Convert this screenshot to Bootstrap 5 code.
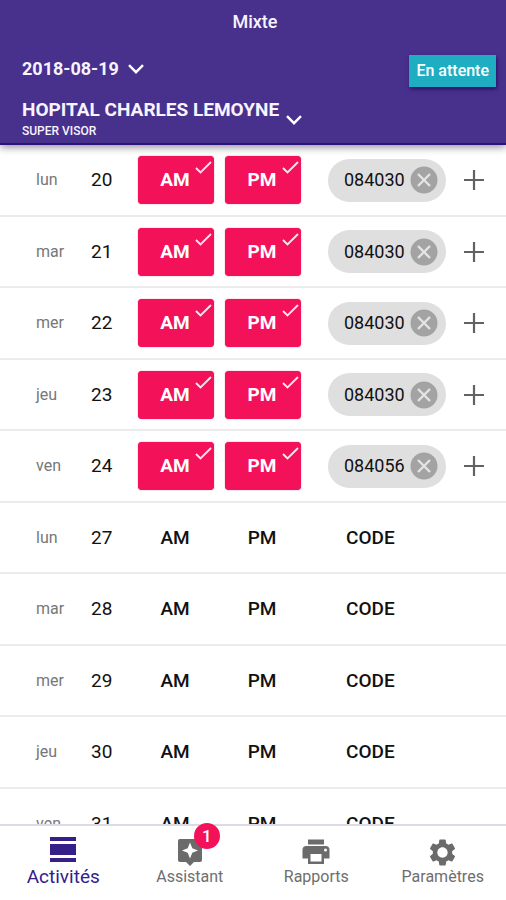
<!DOCTYPE html>
<html lang="fr">
<head>
<meta charset="utf-8">
<meta name="viewport" content="width=device-width, initial-scale=1">
<title>Mixte</title>
<link href="https://cdn.jsdelivr.net/npm/bootstrap@5.3.0/dist/css/bootstrap.min.css" rel="stylesheet">
<style>
  body { font-family: Roboto, "Noto Sans", sans-serif; color: #111; background: #fff; line-height: 24px; font-size: 18px; }
  button { font-family: inherit; }
  svg { display: block; flex: none; }
  .app-head { background: #48318d; border-bottom: 2px solid #2c1280; box-shadow: 0 2px 8px rgba(0,0,0,.45); z-index: 2; color: #f7f4ff; padding: 10px 10px 3px 22px; }
  .app-title { font-size: 18px; line-height: 24px; font-weight: 500; }
  .date-row { padding-top: 21px; }
  .plain { background: none; border: 0; padding: 0; color: inherit; }
  .date-btn { font-size: 18px; font-weight: 700; line-height: 28px; gap: 9px; padding-bottom: 4px; }
  .site-btn { gap: 7px; margin-top: 11px; }
  .site-name { font-size: 19px; font-weight: 700; line-height: 24px; }
  .site-role { font-size: 12px; font-weight: 500; line-height: 18px; }
  .site-btn svg { margin-top: 2px; }
  .status-btn { background: #1fadc2; color: #fff; font-size: 16px; font-weight: 500; line-height: 24px; padding: 4px 7px; border: 0; border-radius: 0; box-shadow: 1px 2px 4px rgba(20,0,80,.7); }
  .day-row { display: grid; grid-template-columns: 55px 47px 76px 76px minmax(118px, 1fr) 20px; align-items: center; padding: 0 22px 0 36px; height: 71px; border-bottom: 2px solid #ebebeb; }
  .day-row:nth-child(odd) { height: 72px; }
  .day-name { color: #777; font-size: 16px; }
  .day-num { font-size: 19px; }
  .slot { position: relative; height: 48px; border: 0; background: none; color: #111; font-size: 19px; font-weight: 500; padding: 0 2px 0 0; border-radius: 4px; }
  .slot.pm { margin-left: 11px; margin-right: -11px; }
  .slot.picked { background: #f31259; color: #fff; font-weight: 700; box-shadow: 0 0 1px #f31259; }
  .slot svg { position: absolute; top: 5px; right: 2px; }
  .code-cell { padding-left: 38px; }
  .chip { background: #dfdfdf; border-radius: 22px; height: 43px; width: 118px; padding: 0 8px 0 16px; font-size: 18px; }
  .code-btn { font-size: 19px; font-weight: 500; padding-left: 18px; }
  .app-tabs { height: 76px; border-top: 2px solid #dcdae6; background: #fff; z-index: 2; }
  .tab-link { color: #6e6e6e; font-size: 16px; line-height: 20px; text-decoration: none; padding-top: 11px; }
  .tab-link.current { color: #35208a; font-size: 19px; }
  .tab-icon { height: 30px; position: relative; }
  .alert-count { position: absolute; left: 16px; top: -14px; width: 26px; height: 26px; line-height: 26px; border-radius: 50%; background: #f31259; color: #fff; font-size: 17px; font-weight: 500; text-align: center; }
</style>
<script src="https://cdn.jsdelivr.net/npm/bootstrap@5.3.0/dist/js/bootstrap.bundle.min.js"></script>
</head>
<body>
<svg width="0" height="0" class="position-absolute" aria-hidden="true">
  <symbol id="tick" viewBox="0 0 17 13"><path d="M1 7 5.500 11.500 16 1" fill="none" stroke="#ffe6ee" stroke-width="1.9"/></symbol>
  <symbol id="cross" viewBox="0 0 28 28"><circle cx="14" cy="14" r="13.5" fill="#a3a3a3"/><path d="M8 8 20 20M20 8 8 20" stroke="#e4e4e4" stroke-width="2.4"/></symbol>
  <symbol id="plus" viewBox="0 0 20 20"><path d="M10 0V20M0 10H20" stroke="#626262" stroke-width="2.2"/></symbol>
  <symbol id="down" viewBox="0 0 16 10"><path d="M1 1.2 8 8.2 15 1.2" fill="none" stroke="#fff" stroke-width="2.4"/></symbol>
</svg>
<div class="d-flex flex-column vh-100 overflow-hidden">
  <header class="app-head">
    <h1 class="app-title text-center mb-0 me-2">Mixte</h1>
    <div class="date-row d-flex justify-content-between align-items-center">
      <button type="button" class="plain date-btn d-flex align-items-center">2018-08-19 <svg width="16" height="10"><use href="#down"/></svg></button>
      <button type="button" class="status-btn">En attente</button>
    </div>
    <button type="button" class="plain site-btn d-flex align-items-center text-start">
      <span><span class="site-name d-block">HOPITAL CHARLES LEMOYNE</span><span class="site-role d-block">SUPER VISOR</span></span>
      <svg width="16" height="10"><use href="#down"/></svg>
    </button>
  </header>
  <main class="flex-fill overflow-hidden">
    <ul class="list-unstyled mb-0" id="days"></ul>
  </main>
  <nav class="app-tabs d-flex flex-shrink-0" aria-label="Navigation">
    <a href="#" class="tab-link current col d-flex flex-column align-items-center" aria-current="page">
      <span class="tab-icon"><svg width="26" height="26" viewBox="0 0 26 26" fill="#35208a"><path d="M0 0H26V4H0zM0 7H26V18H0zM0 21H26V25H0z"/></svg></span>
      Activités
    </a>
    <a href="#" class="tab-link col d-flex flex-column align-items-center">
      <span class="tab-icon"><svg width="24" height="29" viewBox="0 0 24 29" fill="#6b6b6b"><path fill-rule="evenodd" d="M2 2H22Q24 2 24 4V23Q24 25 22 25H16L12 29 8 25H2Q0 25 0 23V4Q0 2 2 2ZM12 5.500 9.700 11.200 4 13.500 9.700 15.800 12 21.500 14.300 15.800 20 13.500 14.300 11.200Z"/></svg><span class="alert-count">1</span></span>
      Assistant
    </a>
    <a href="#" class="tab-link col d-flex flex-column align-items-center">
      <span class="tab-icon"><svg width="28" height="28" viewBox="0 0 28 28" fill="#6b6b6b"><path d="M6 2.500H22V7.500H6z"/><path fill-rule="evenodd" d="M4.500 9H23.500Q27.500 9 27.500 13V21.500H22V27H6V21.500H.5V13Q.5 9 4.500 9ZM8.500 17V24.500H19.500V17ZM23.500 11.500A1.500 1.500 0 1 0 23.500 14.500 1.500 1.500 0 1 0 23.500 11.500Z"/></svg></span>
      Rapports
    </a>
    <a href="#" class="tab-link col d-flex flex-column align-items-center">
      <span class="tab-icon"><svg width="31" height="31" viewBox="0 0 24 24" fill="#6b6b6b"><path d="M19.430 12.980c.04-.32.07-.64.07-.98s-.03-.66-.07-.98l2.110-1.650c.19-.15.24-.42.12-.64l-2-3.460c-.12-.22-.39-.3-.61-.22l-2.490 1c-.52-.4-1.080-.73-1.690-.98l-.38-2.650C14.460 2.180 14.250 2 14 2h-4c-.25 0-.46.18-.49.42l-.38 2.650c-.61.25-1.170.59-1.690.98l-2.490-1c-.23-.09-.49 0-.61.22l-2 3.460c-.13.22-.07.49.12.64l2.110 1.650c-.04.32-.07.65-.07.98s.03.66.07.98l-2.110 1.650c-.19.15-.24.42-.12.64l2 3.460c.12.22.39.3.61.22l2.490-1c.52.4 1.080.73 1.690.98l.38 2.650c.03.24.24.42.49.42h4c.25 0 .46-.18.49-.42l.38-2.650c.61-.25 1.170-.59 1.690-.98l2.490 1c.23.09.49 0 .61-.22l2-3.460c.12-.22.07-.49-.12-.64l-2.110-1.650zM12 16c-2.200 0-4-1.800-4-4s1.800-4 4-4 4 1.800 4 4-1.800 4-4 4z"/></svg></span>
      Paramètres
    </a>
  </nav>
</div>
<script>
  const days = [
    ["lun", 20, "084030"], ["mar", 21, "084030"], ["mer", 22, "084030"], ["jeu", 23, "084030"], ["ven", 24, "084056"],
    ["lun", 27], ["mar", 28], ["mer", 29], ["jeu", 30], ["ven", 31]
  ];
  const slot = (label, on) => `<button type="button" class="slot ${label.toLowerCase()} ${on ? "picked" : ""}" aria-pressed="${!!on}">${label}${on ? '<svg width="17" height="13"><use href="#tick"/></svg>' : ""}</button>`;
  document.getElementById("days").innerHTML = days.map(([name, num, code]) => `
    <li class="day-row">
      <span class="day-name">${name}</span><span class="day-num">${num}</span>
      ${slot("AM", code)}${slot("PM", code)}
      <div class="code-cell">${code
        ? `<div class="chip d-flex align-items-center justify-content-between"><span>${code}</span><button type="button" class="plain" aria-label="Retirer ${code}"><svg width="28" height="28"><use href="#cross"/></svg></button></div>`
        : '<button type="button" class="plain code-btn">CODE</button>'}</div>
      ${code ? '<button type="button" class="plain" aria-label="Ajouter un code"><svg width="20" height="20"><use href="#plus"/></svg></button>' : ""}
    </li>`).join("");
</script>
</body>
</html>
